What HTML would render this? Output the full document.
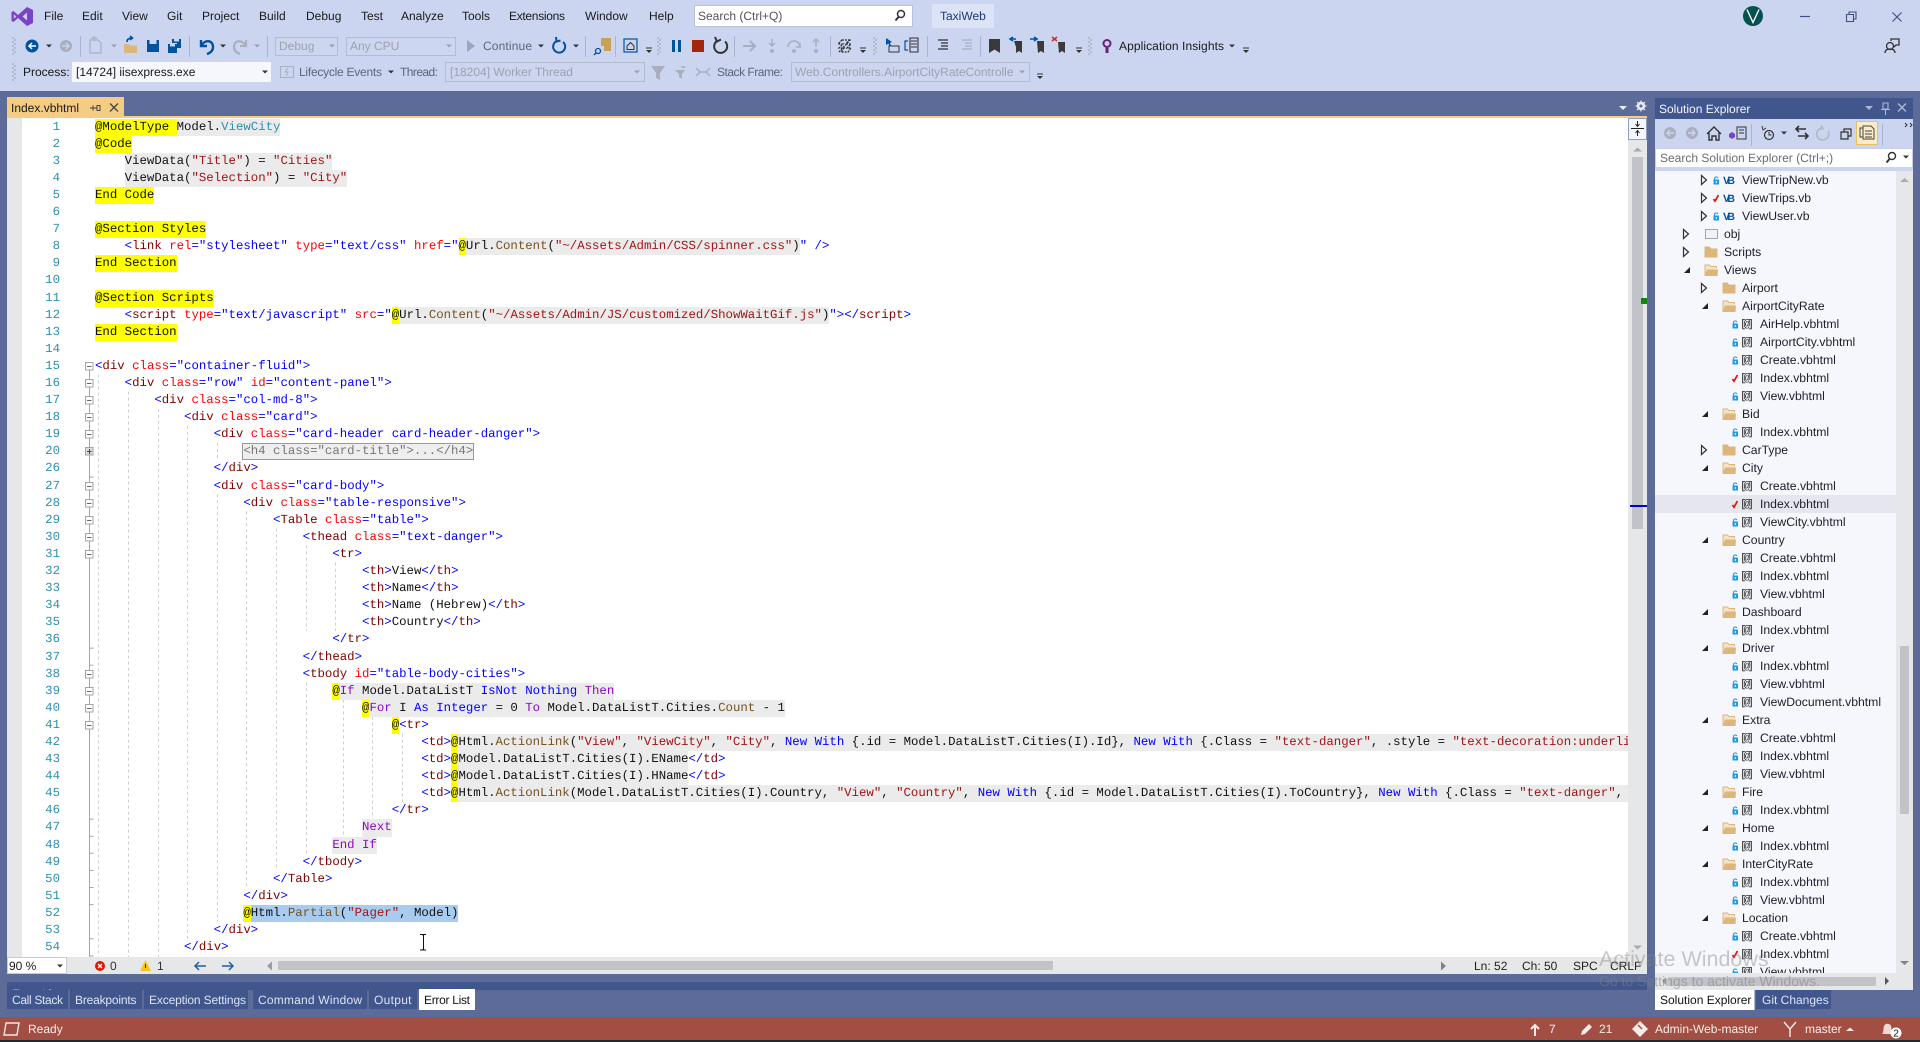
<!DOCTYPE html>
<html><head><meta charset="utf-8"><title>Index.vbhtml - TaxiWeb</title>
<style>
html,body{margin:0;padding:0;width:1920px;height:1042px;overflow:hidden;background:#5D6B99}
svg{position:absolute;left:0;top:0}
svg text{font-family:"Liberation Sans",sans-serif;font-size:12px;text-rendering:geometricPrecision}
svg .tree text{font-size:12.2px}
svg .tree text.vb{font-size:10.5px;font-weight:bold;fill:#00539C}
svg .at text{font-family:"Liberation Mono",monospace;font-size:11px}
#nums,#code{position:absolute;top:118.6px;font-family:"Liberation Mono",monospace;font-size:12.37px;line-height:17.1px;text-rendering:geometricPrecision;overflow:hidden;height:838.4px}
#nums{left:22px;width:38px;text-align:right;color:#2B91AF}
#code{left:95px;width:1533px;color:#111}
#nums div,#code div{height:17.1px;white-space:pre}
b,i,u,s,em,kbd,var{font:inherit;text-decoration:none;font-style:normal;font-weight:normal}
b{color:#0000FF}i{color:#800000}u{color:#FF0000}s{color:#A31515}em{color:#74531F}kbd{color:#8F08C4}var{color:#2B91AF}
mark,ins,del{display:inline-block;height:17.1px;vertical-align:top;text-decoration:none;color:inherit}
mark{background:#FFFF00}ins{background:#EBEBEB}del{background:#A8CCF0}
.fold{display:inline-block;height:15px;line-height:14px;margin-top:1px;vertical-align:top;background:#EEE;outline:1px solid #999;color:#777}
</style></head><body>
<svg width="1920" height="1042" viewBox="0 0 1920 1042">
<defs>
<path id="dr" d="M-3-1.5h6l-3 3z" fill="#333"/>
<path id="drg" d="M-3-1.5h6l-3 3z" fill="#9AA0B0"/>
<g id="of"><path d="M-3-3h6" stroke="#333"/><path d="M-3-1h6l-3 3z" fill="#333"/></g>
<g id="gr" fill="#777"><circle cx="-1" cy="-8" r=".6"/><circle cx="1" cy="-6" r=".6"/><circle cx="-1" cy="-4" r=".6"/><circle cx="1" cy="-2" r=".6"/><circle cx="-1" cy="0" r=".6"/><circle cx="1" cy="2" r=".6"/><circle cx="-1" cy="4" r=".6"/><circle cx="1" cy="6" r=".6"/><circle cx="-1" cy="8" r=".6"/></g>
<g id="ob"><rect x="-3.5" y="-3.5" width="7.5" height="7.5" fill="#fff" stroke="#A5A5A5"/><path d="M-2 .5h4.500" stroke="#666"/></g>
<g id="ex"><path d="M-2.500-4.500L2.500 0-2.500 4.500z" fill="none" stroke="#333" stroke-width="1.200"/></g>
<path id="op" d="M4-3V3H-2z" fill="#222"/>
<path id="fc" d="M-6.500-5.500h5l1.500 2h6.500v9h-13z" fill="#DCB67A"/>
<g id="fo"><path d="M-6 5.500V-5h4.500l1.500 1.500h5.500v2" fill="#F3E3C8" stroke="#DCB67A"/><path d="M-6.500 6L-4-.500H7L6.500 6z" fill="#DCB67A"/></g>
<g id="lk"><path d="M-2.500-.500h5.500v5h-5.500z" fill="#1E9CE8"/><path d="M-1.500-.500v-1.500a2 2 0 0 1 3.500 0" fill="none" stroke="#1E9CE8" stroke-width="1.100"/><rect x="-.200" y="1" width="1" height="2" fill="#fff"/></g>
<path id="ck" d="M-2.500 1L-1 3.200 2.500-3" fill="none" stroke="#E51400" stroke-width="1.700"/>
<clipPath id="tc"><rect x="1655" y="171" width="241" height="802"/></clipPath>
<clipPath id="dc"><rect x="7" y="982" width="1640" height="8"/></clipPath>
</defs>

<!-- chrome backgrounds -->
<rect width="1920" height="1042" fill="#5D6B99"/>
<rect width="1920" height="91" fill="#CCD5F0"/>
<rect x="7" y="97" width="117" height="21" fill="#F5CC84"/>
<rect x="7" y="116" width="1640" height="2" fill="#F5CC84"/>
<rect x="7" y="118" width="15" height="839" fill="#E6E7E8"/>
<rect x="22" y="118" width="1606" height="839" fill="#fff"/>
<rect x="1628" y="118" width="19" height="839" fill="#E6E7E8"/>
<rect x="7" y="957" width="1640" height="17" fill="#E6E7E8"/>
<rect x="7" y="982" width="1640" height="8" fill="#40568D"/>
<text x="12" y="998" fill="#fff" clip-path="url(#dc)">Error List</text>
<rect x="0" y="1017" width="1920" height="23" fill="#A34E43"/>
<rect x="0" y="1040" width="1920" height="2" fill="#1E2A2C"/>

<!-- Title bar -->
<path d="M27 7L33 10V23L27 26 18 18 13.500 22 11.500 21V12L13.500 11 18 15zM27 12.500L22.500 16.500 27 20.500zM13.800 14.200V18.800L16.300 16.500z" fill="#7B42C8" fill-rule="evenodd"/>
<g fill="#1A1A1A">
<text x="44" y="20">File</text><text x="82" y="20">Edit</text><text x="122" y="20">View</text><text x="167" y="20">Git</text><text x="202" y="20">Project</text><text x="259" y="20">Build</text><text x="306" y="20">Debug</text><text x="361" y="20">Test</text><text x="401" y="20">Analyze</text><text x="462" y="20">Tools</text><text x="509" y="20" textLength="56">Extensions</text><text x="585" y="20">Window</text><text x="649" y="20">Help</text>
</g>
<rect x="694.500" y="5.500" width="218" height="21" fill="#fff" stroke="#B9C1D8"/>
<text x="698" y="20" fill="#555">Search (Ctrl+Q)</text>
<g fill="none" stroke="#333" stroke-width="1.500"><circle cx="901" cy="14" r="3.500"/><path d="M898.500 17l-3 3.500" stroke-width="2"/></g>
<rect x="932" y="4" width="62" height="24" fill="#DDE3F7"/>
<text x="940" y="20" fill="#1F3A73">TaxiWeb</text>
<circle cx="1753" cy="16" r="10" fill="#06504F"/>
<path d="M1747 9.500l6 13 6-13" fill="none" stroke="#fff" stroke-width="1.400"/>
<path d="M1800 16.500h10" stroke="#3F4F80" stroke-width="1.200"/>
<path d="M1846.500 14.500h7v7h-7z M1849 14.500v-2.500h7v7h-2.500" fill="none" stroke="#3F4F80" stroke-width="1.100"/>
<path d="M1892.500 12.500l9 9m0-9l-9 9" stroke="#3F4F80" stroke-width="1.100"/>
<g fill="none" stroke="#333" stroke-width="1.300"><circle cx="1890" cy="46" r="3.500"/><path d="M1885 53c0-3 2-4 5-4s5 1 5 4"/><path d="M1891 41v-2h8v6h-3l-2 2"/></g>

<!-- Toolbar 1 -->
<use href="#gr" x="14" y="46"/>
<circle cx="32" cy="46" r="6.500" fill="#00539C"/><path d="M36 46h-7m3-3l-3 3 3 3" fill="none" stroke="#fff" stroke-width="1.500"/>
<use href="#dr" x="49" y="46"/>
<circle cx="66" cy="46" r="6" fill="#A9AFBF"/><path d="M62 46h7m-3-3l3 3-3 3" fill="none" stroke="#CCD5F0" stroke-width="1.400"/>
<path d="M80.500 36v21M189.500 36v21M267.500 36v21M585.500 36v21M615.500 36v21M734.500 36v21M830.500 36v21M927.500 36v21M980.500 36v21" stroke="#A9B4D0"/>
<path d="M90 40h8l3 3v10H90z M94 36v5m-3-3h6" fill="none" stroke="#A9AFBF" stroke-width="1.200"/>
<use href="#drg" x="114" y="46"/>
<path d="M124 52V44h5l1 1.500h7V53H124z" fill="#DCB67A"/><path d="M127 42c0-3 2-4 5-4m-2-2l2.500 2-2.500 2" fill="none" stroke="#00539C" stroke-width="1.600"/>
<path d="M147 40h12v12h-12z" fill="#00539C"/><path d="M149.500 40h7v4h-7z" fill="#CCD5F0"/>
<path d="M168 44h9v9h-9z M172 39h9v9h-4v-5h-5z" fill="#00539C"/><path d="M170 44h5v2.500h-5z M174 39h5v2.500h-5z" fill="#CCD5F0"/>
<path d="M201 40v6h6 M201 46c4-7 12-6 12 1 0 4-3 6-6 7" fill="none" stroke="#00539C" stroke-width="2.400"/>
<use href="#dr" x="223" y="46"/>
<path d="M246 40v6h-6 M246 46c-4-7-12-6-12 1 0 4 3 6 6 7" fill="none" stroke="#A9AFBF" stroke-width="2.200"/>
<use href="#drg" x="257" y="46"/>
<rect x="275.500" y="37.500" width="62" height="18" fill="#CDD6EE" stroke="#B5BCD0"/><text x="279" y="50" fill="#9CA2B2">Debug</text><use href="#drg" x="332" y="46"/>
<rect x="346.500" y="37.500" width="109" height="18" fill="#CDD6EE" stroke="#B5BCD0"/><text x="350" y="50" fill="#9CA2B2">Any CPU</text><use href="#drg" x="449" y="46"/>
<path d="M467 40l8 6-8 6z" fill="#9CA5BC"/>
<text x="483" y="50" fill="#5E6678" textLength="49">Continue</text><use href="#dr" x="541" y="46"/>
<path d="M563 42a6 6 0 1 1-7-.500M556 37l.500 4.500 4-1" fill="none" stroke="#00539C" stroke-width="2"/>
<use href="#dr" x="576" y="46"/>
<path d="M601 38h10v13h-7v-5h-3z" fill="#C9A05A"/><circle cx="598" cy="51" r="2.500" fill="none" stroke="#00539C" stroke-width="1.300"/><path d="M596 53l-2 2" stroke="#00539C" stroke-width="1.500"/>
<rect x="624" y="39" width="13" height="13" fill="none" stroke="#00539C" stroke-width="1.200"/><path d="M627 46l3.500-3.500 3.500 3.500v3.500h-7z" fill="none" stroke="#333"/>
<use href="#of" x="649" y="51"/><use href="#gr" x="659" y="46"/>
<path d="M672 40h3v12h-3z M678 40h3v12h-3z" fill="#00539C"/>
<rect x="692" y="40" width="12" height="12" fill="#A1260D"/>
<path d="M725 41.500a6.500 6.500 0 1 1-8-.500M715 37l2 4.500 4-2" fill="none" stroke="#333" stroke-width="2"/>
<path d="M743 46h12m-5-5l5 5-5 5" fill="none" stroke="#A9AFBF" stroke-width="2"/>
<path d="M772 39v7m-3-3l3 3 3-3" fill="none" stroke="#A9AFBF" stroke-width="1.500"/><circle cx="772" cy="51" r="2" fill="#A9AFBF"/>
<path d="M788 47c0-8 12-8 12 0m0-4v4h-4" fill="none" stroke="#A9AFBF" stroke-width="1.600"/><circle cx="794" cy="51" r="2" fill="#A9AFBF"/>
<path d="M816 47v-8m-3 3l3-3 3 3" fill="none" stroke="#A9AFBF" stroke-width="1.500"/><circle cx="816" cy="51" r="2" fill="#A9AFBF"/>
<path d="M839 52l12-13M842 40h7l-3 4h5l-4 4h4l-3 4h-7l3-4h-5l4-4h-5z" fill="none" stroke="#333" stroke-width="1.300" stroke-dasharray="2 1"/>
<use href="#of" x="863" y="51"/><use href="#gr" x="875" y="46"/>
<path d="M886 38l6 4-2 1 1 3-1.500.500-1-3-2.500 1.500z" fill="#00539C"/><rect x="889" y="46" width="10" height="6" fill="none" stroke="#333"/>
<path d="M908 41h-3v9h3" fill="none" stroke="#00539C" stroke-width="1.200"/><path d="M910 38h8v14h-8zM911 41h6M911 44h6M911 47h6" fill="none" stroke="#333" stroke-width="1.100"/>
<path d="M938 40h10M941 43h7M941 46h7M938 49h10" stroke="#333" stroke-width="1.200"/>
<path d="M962 40h10M965 43h7M965 46h7M962 49h10" stroke="#A9AFBF" stroke-width="1.200"/>
<path d="M989 39h11v14l-5.500-3.500L989 53z" fill="#3A3A3A"/>
<path d="M1014 41h8v12l-3-2-3 2v-6" fill="#3A3A3A"/><path d="M1016 39h-5m2-2l-3 2 3 2" stroke="#00539C" fill="none" stroke-width="1.600"/>
<path d="M1037 41h7v12l-3-2-3 2z" fill="#3A3A3A"/><path d="M1030 39h6m-2-2l3 2-3 2" stroke="#00539C" fill="none" stroke-width="1.600"/>
<path d="M1058 42h7v11l-3-2-3 2z" fill="#3A3A3A"/><path d="M1052 37l5 4m0-4l-5 4" stroke="#C4302B" stroke-width="1.600"/>
<use href="#of" x="1079" y="51"/><use href="#gr" x="1090" y="46"/>
<circle cx="1107" cy="43.500" r="3.500" fill="none" stroke="#68217A" stroke-width="2"/><path d="M1105.500 48h3v5h-3z" fill="#68217A"/>
<text x="1119" y="50" fill="#1A1A1A" textLength="105">Application Insights</text><use href="#dr" x="1232" y="46"/><use href="#of" x="1246" y="51"/>

<!-- Toolbar 2 -->
<use href="#gr" x="14" y="72"/>
<text x="23" y="76" fill="#1A1A1A">Process:</text>
<rect x="72" y="62" width="199" height="20" fill="#F5F7FD"/>
<text x="76" y="76" fill="#1A1A1A">[14724] iisexpress.exe</text><use href="#dr" x="265" y="72"/>
<rect x="280.500" y="66.500" width="13" height="11" fill="none" stroke="#A9AFBF"/><path d="M288 68l-3 4h3l-2 4" stroke="#A9AFBF" fill="none"/>
<text x="299" y="76" fill="#5E6678" textLength="83">Lifecycle Events</text><use href="#dr" x="391" y="72"/>
<text x="400" y="76" fill="#5E6678" textLength="38">Thread:</text>
<rect x="445.500" y="62.500" width="199" height="19" fill="#CDD6EE" stroke="#B5BCD0"/><text x="450" y="76" fill="#9CA2B2">[18204] Worker Thread</text><use href="#drg" x="637" y="72"/>
<path d="M651 66h14l-5 7v7l-4-2v-5z" fill="#A9AFBF"/>
<path d="M675 70h10l-3 4v5l-3-2v-3z M680 66l6 .500-2 2" fill="#A9AFBF"/>
<path d="M696 68l4 4-4 4M710 68l-4 4 4 4M700 72h6" fill="none" stroke="#A9AFBF" stroke-width="1.500"/>
<text x="717" y="76" fill="#5E6678" textLength="66">Stack Frame:</text>
<rect x="791.500" y="62.500" width="238" height="19" fill="#CDD6EE" stroke="#B5BCD0"/>
<svg x="791" y="62" width="223" height="20"><text x="4" y="14" fill="#9CA2B2">Web.Controllers.AirportCityRateController</text></svg>
<use href="#drg" x="1022" y="72"/><use href="#of" x="1040" y="77"/>

<!-- Document tab -->
<text x="11" y="112" fill="#1A1A1A">Index.vbhtml</text>
<path d="M93 105.500v5M93 108h4M97 105.500v5h3v-5zM90 108h3" stroke="#444" fill="none"/>
<path d="M110 103.500l8 8m0-8l-8 8" stroke="#444" stroke-width="1.300"/>
<path d="M1619 106h8l-4 4z" fill="#E8EBF5"/>
<circle cx="1641" cy="106" r="3" fill="none" stroke="#E8EBF5" stroke-width="2.400"/><path d="M1641 100.500v11M1635.500 106h11M1637 102l8 8M1645 102l-8 8" stroke="#E8EBF5" stroke-width="1.200"/><circle cx="1641" cy="106" r="1.500" fill="#5D6B99"/>

<!-- Editor scrollbar -->
<rect x="1628.500" y="118.500" width="18" height="21" fill="#F5F6FC" stroke="#8FA0C8"/>
<path d="M1631 128.500h13M1637.500 121v5m-2-2l2 2.500 2-2.500M1637.500 136v-5m-2 2l2-2.500 2 2.500" fill="none" stroke="#222"/>
<path d="M1633 151.500l4.500-4 4.500 4z" fill="#A9ABB2"/>
<rect x="1632" y="157" width="11" height="372" fill="#C2C3C9"/>
<rect x="1641" y="298" width="6" height="6" fill="#0A8A0A"/>
<rect x="1630" y="505" width="17" height="2" fill="#0000CC"/>
<path d="M1633 945.500l4.500 4 4.500-4z" fill="#A9ABB2"/>

<!-- Outlining margin -->
<path d="M89.500 362V957" stroke="#A5A5A5"/>
<path d="M89.500 477.100h4M89.500 648.100h4M89.500 665.200h4M89.500 819.100h4M89.500 836.200h4M89.500 853.300h4M89.500 870.400h4M89.500 887.500h4M89.500 904.600h4M89.500 938.800h4M89.500 955.900h4" stroke="#A5A5A5"/>
<use href="#ob" x="89" y="366"/><use href="#ob" x="89" y="383"/><use href="#ob" x="89" y="400"/><use href="#ob" x="89" y="417"/><use href="#ob" x="89" y="434"/>
<rect x="85.500" y="447.500" width="7.500" height="7.500" fill="#DDD" stroke="#A5A5A5"/><path d="M87 451.500h4.500M89.500 449v5" stroke="#444"/>
<use href="#ob" x="89" y="486"/><use href="#ob" x="89" y="503"/><use href="#ob" x="89" y="520"/><use href="#ob" x="89" y="537"/><use href="#ob" x="89" y="554"/>
<use href="#ob" x="89" y="674"/><use href="#ob" x="89" y="691"/><use href="#ob" x="89" y="708"/><use href="#ob" x="89" y="725"/>

<!-- indent guides -->
<g stroke="#CFCFCF" stroke-dasharray="3 3">
<path d="M98.500 374.500V957M128.500 391.600V957M158.500 408.700V957M187.500 425.800V938.800M217.500 442.900V460M217.500 494.200V921.700M246.500 511.300V887.500M276.500 528.400V870.400M306.500 545.500V631M306.500 682.300V853.300M335.500 562.600V631M343.500 699.400V836.200M372.500 716.500V819.100M402.500 733.600V802"/>
</g>

<!-- Text cursor -->
<path d="M420 934.500h2.500l.500.500.500-.500h2.500M423.500 935v14.500M420 950h2.500l.500-.500.500.500h2.500" fill="none" stroke="#111"/>

<!-- Editor footer -->
<rect x="7.500" y="957.500" width="59" height="16" fill="#fff" stroke="#C5CBDD"/>
<text x="9" y="970" fill="#1A1A1A">90 %</text><use href="#dr" x="60" y="966"/>
<circle cx="100" cy="966" r="5" fill="#E51400"/><path d="M98 964l4 4m0-4l-4 4" stroke="#fff" stroke-width="1.300"/>
<text x="110" y="970" fill="#333">0</text>
<path d="M145.500 960l5.500 11h-11z" fill="#F5C518"/><path d="M145.500 964v4" stroke="#333"/>
<text x="157" y="970" fill="#333">1</text>
<path d="M206 966h-11m4-4l-4 4 4 4M222 966h11m-4-4l4 4-4 4" fill="none" stroke="#1E5FA8" stroke-width="1.500"/>
<path d="M272 961.500v9l-5-4.500z" fill="#9A9CA3"/>
<rect x="278" y="961" width="775" height="9" fill="#C2C3C9"/>
<path d="M1441 961.500v9l5-4.500z" fill="#7E8190"/>
<g fill="#222"><text x="1474" y="970">Ln: 52</text><text x="1522" y="970">Ch: 50</text><text x="1573" y="970">SPC</text><text x="1610" y="970">CRLF</text></g>

<!-- Bottom tabs -->
<g fill="#40568D"><rect x="7" y="990" width="61" height="19"/><rect x="70" y="990" width="72" height="19"/><rect x="144" y="990" width="104" height="19"/><rect x="253" y="990" width="114" height="19"/><rect x="369" y="990" width="48" height="19"/></g>
<rect x="419" y="989" width="56" height="21" fill="#fff"/>
<g fill="#DCE2F3"><text x="12" y="1004" textLength="51">Call Stack</text><text x="75" y="1004" textLength="61.500">Breakpoints</text><text x="149" y="1004" textLength="97">Exception Settings</text><text x="258" y="1004" textLength="104">Command Window</text><text x="374" y="1004" textLength="37.500">Output</text></g>
<text x="424" y="1004" fill="#111" textLength="46">Error List</text>

<!-- Solution Explorer -->
<rect x="1655" y="98" width="258" height="21" fill="#40568D"/>
<text x="1659" y="113" fill="#F3F5FB">Solution Explorer</text>
<path d="M1865 106h8l-4 4z" fill="#AEB8D4"/>
<path d="M1883 103h5v6h-5zM1881 109.500h9M1885.500 110v5" fill="none" stroke="#AEB8D4" stroke-width="1.100"/>
<path d="M1898 103.500l8 8m0-8l-8 8" stroke="#AEB8D4" stroke-width="1.400"/>
<rect x="1655" y="119" width="258" height="48" fill="#CCD5F0"/>
<circle cx="1670" cy="133" r="6" fill="#A9AFBF"/><path d="M1674 133h-7m3-3l-3 3 3 3" fill="none" stroke="#CCD5F0" stroke-width="1.400"/>
<circle cx="1692" cy="133" r="6" fill="#A9AFBF"/><path d="M1688 133h7m-3-3l3 3-3 3" fill="none" stroke="#CCD5F0" stroke-width="1.400"/>
<path d="M1707 134l7-7 7 7M1709 132v8h3v-4h4v4h3v-8" fill="none" stroke="#333" stroke-width="1.400"/>
<path d="M1737 127h9v12h-9zM1739 130h5M1739 133h5" fill="none" stroke="#333"/><path d="M1729 134l3-2 3 2v3l-3 2-3-2z" fill="#7B42C8"/>
<path d="M1751.500 124v22M1882.500 124v22" stroke="#A9B4D0"/>
<circle cx="1769" cy="135" r="4.500" fill="none" stroke="#333" stroke-width="1.200"/><path d="M1769 132v3h2.500M1762 126l1 4 3-2" fill="none" stroke="#333"/>
<use href="#dr" x="1784" y="133"/>
<path d="M1796 129h10M1799 126l-3 3 3 3M1808 136h-10M1805 133l3 3-3 3" fill="none" stroke="#333" stroke-width="1.600"/>
<path d="M1828 131a6 6 0 1 1-6-3m-1-2.500l2 3-3 1" fill="none" stroke="#B4BAC8" stroke-width="1.800"/>
<path d="M1841 132h7v7h-7zM1844 132v-3h7v7h-3" fill="none" stroke="#333" stroke-width="1.200"/>
<rect x="1856.500" y="121.500" width="21" height="23" fill="#FCEBC8" stroke="#E5C365"/>
<path d="M1863 128h-3v9h3M1863 126h8l3 3v10h-11zM1865 131h7M1865 134h7M1865 137h7" fill="none" stroke="#444"/>
<path d="M1905 123l2 2-2 2M1910 123l2 2-2 2" fill="none" stroke="#333"/>
<rect x="1655.500" y="148.500" width="257" height="19" fill="#fff" stroke="#C8CFE6"/>
<text x="1660" y="162" fill="#6D6D6D">Search Solution Explorer (Ctrl+;)</text>
<circle cx="1892" cy="156" r="3.500" fill="none" stroke="#333" stroke-width="1.400"/><path d="M1889.500 159l-3 3.500" stroke="#333" stroke-width="2"/>
<use href="#dr" x="1906" y="157"/>
<rect x="1655" y="167" width="258" height="4" fill="#CCD5F0"/>
<rect x="1655" y="171" width="241" height="802" fill="#F6F7FD"/>
<rect x="1896" y="171" width="17" height="802" fill="#E6E7E8"/>
<path d="M1900 182l4.500-4 4.500 4z" fill="#A9ABB2"/>
<rect x="1900" y="646" width="9" height="168" fill="#C2C3C9"/>
<path d="M1900 961l4.500 4 4.500-4z" fill="#80838C"/>
<rect x="1655" y="495" width="241" height="18" fill="#E6E7EE"/>
<g clip-path="url(#tc)">
<g class="tree" fill="#1E1E2E">
<use href="#ex" x="1704" y="180"/><use href="#lk" x="1716" y="180"/><text class="vb" x="1723" y="184" textLength="12">VB</text><text x="1742" y="184">ViewTripNew.vb</text>
<use href="#ex" x="1704" y="198"/><use href="#ck" x="1716" y="198"/><text class="vb" x="1723" y="202" textLength="12">VB</text><text x="1742" y="202">ViewTrips.vb</text>
<use href="#ex" x="1704" y="216"/><use href="#lk" x="1716" y="216"/><text class="vb" x="1723" y="220" textLength="12">VB</text><text x="1742" y="220">ViewUser.vb</text>
<use href="#ex" x="1686" y="234"/><rect x="1705.500" y="229.500" width="12" height="9" fill="#EEF0FA" stroke="#555" stroke-dasharray="1 1"/><text x="1724" y="238">obj</text>
<use href="#ex" x="1686" y="252"/><use href="#fc" x="1711" y="252"/><text x="1724" y="256">Scripts</text>
<use href="#op" x="1686" y="270"/><use href="#fo" x="1711" y="270"/><text x="1724" y="274">Views</text>
<use href="#ex" x="1704" y="288"/><use href="#fc" x="1729" y="288"/><text x="1742" y="292">Airport</text>
<use href="#op" x="1704" y="306"/><use href="#fo" x="1729" y="306"/><text x="1742" y="310">AirportCityRate</text>
<use href="#lk" x="1735" y="324"/><text x="1760" y="328">AirHelp.vbhtml</text>
<use href="#lk" x="1735" y="342"/><text x="1760" y="346">AirportCity.vbhtml</text>
<use href="#lk" x="1735" y="360"/><text x="1760" y="364">Create.vbhtml</text>
<use href="#ck" x="1735" y="378"/><text x="1760" y="382">Index.vbhtml</text>
<use href="#lk" x="1735" y="396"/><text x="1760" y="400">View.vbhtml</text>
<use href="#op" x="1704" y="414"/><use href="#fo" x="1729" y="414"/><text x="1742" y="418">Bid</text>
<use href="#lk" x="1735" y="432"/><text x="1760" y="436">Index.vbhtml</text>
<use href="#ex" x="1704" y="450"/><use href="#fc" x="1729" y="450"/><text x="1742" y="454">CarType</text>
<use href="#op" x="1704" y="468"/><use href="#fo" x="1729" y="468"/><text x="1742" y="472">City</text>
<use href="#lk" x="1735" y="486"/><text x="1760" y="490">Create.vbhtml</text>
<use href="#ck" x="1735" y="504"/><text x="1760" y="508">Index.vbhtml</text>
<use href="#lk" x="1735" y="522"/><text x="1760" y="526">ViewCity.vbhtml</text>
<use href="#op" x="1704" y="540"/><use href="#fo" x="1729" y="540"/><text x="1742" y="544">Country</text>
<use href="#lk" x="1735" y="558"/><text x="1760" y="562">Create.vbhtml</text>
<use href="#lk" x="1735" y="576"/><text x="1760" y="580">Index.vbhtml</text>
<use href="#lk" x="1735" y="594"/><text x="1760" y="598">View.vbhtml</text>
<use href="#op" x="1704" y="612"/><use href="#fo" x="1729" y="612"/><text x="1742" y="616">Dashboard</text>
<use href="#lk" x="1735" y="630"/><text x="1760" y="634">Index.vbhtml</text>
<use href="#op" x="1704" y="648"/><use href="#fo" x="1729" y="648"/><text x="1742" y="652">Driver</text>
<use href="#lk" x="1735" y="666"/><text x="1760" y="670">Index.vbhtml</text>
<use href="#lk" x="1735" y="684"/><text x="1760" y="688">View.vbhtml</text>
<use href="#lk" x="1735" y="702"/><text x="1760" y="706">ViewDocument.vbhtml</text>
<use href="#op" x="1704" y="720"/><use href="#fo" x="1729" y="720"/><text x="1742" y="724">Extra</text>
<use href="#lk" x="1735" y="738"/><text x="1760" y="742">Create.vbhtml</text>
<use href="#lk" x="1735" y="756"/><text x="1760" y="760">Index.vbhtml</text>
<use href="#lk" x="1735" y="774"/><text x="1760" y="778">View.vbhtml</text>
<use href="#op" x="1704" y="792"/><use href="#fo" x="1729" y="792"/><text x="1742" y="796">Fire</text>
<use href="#lk" x="1735" y="810"/><text x="1760" y="814">Index.vbhtml</text>
<use href="#op" x="1704" y="828"/><use href="#fo" x="1729" y="828"/><text x="1742" y="832">Home</text>
<use href="#lk" x="1735" y="846"/><text x="1760" y="850">Index.vbhtml</text>
<use href="#op" x="1704" y="864"/><use href="#fo" x="1729" y="864"/><text x="1742" y="868">InterCityRate</text>
<use href="#lk" x="1735" y="882"/><text x="1760" y="886">Index.vbhtml</text>
<use href="#lk" x="1735" y="900"/><text x="1760" y="904">View.vbhtml</text>
<use href="#op" x="1704" y="918"/><use href="#fo" x="1729" y="918"/><text x="1742" y="922">Location</text>
<use href="#lk" x="1735" y="936"/><text x="1760" y="940">Create.vbhtml</text>
<use href="#ck" x="1735" y="954"/><text x="1760" y="958">Index.vbhtml</text>
<use href="#lk" x="1735" y="972"/><text x="1760" y="976">View.vbhtml</text>
</g>
<g class="at" fill="#222" transform="translate(1740 -1)">
<text y="328" textLength="14">[@]</text><text y="346" textLength="14">[@]</text><text y="364" textLength="14">[@]</text><text y="382" textLength="14">[@]</text><text y="400" textLength="14">[@]</text><text y="436" textLength="14">[@]</text><text y="490" textLength="14">[@]</text><text y="508" textLength="14">[@]</text><text y="526" textLength="14">[@]</text><text y="562" textLength="14">[@]</text><text y="580" textLength="14">[@]</text><text y="598" textLength="14">[@]</text><text y="634" textLength="14">[@]</text><text y="670" textLength="14">[@]</text><text y="688" textLength="14">[@]</text><text y="706" textLength="14">[@]</text><text y="742" textLength="14">[@]</text><text y="760" textLength="14">[@]</text><text y="778" textLength="14">[@]</text><text y="814" textLength="14">[@]</text><text y="850" textLength="14">[@]</text><text y="886" textLength="14">[@]</text><text y="904" textLength="14">[@]</text><text y="940" textLength="14">[@]</text><text y="958" textLength="14">[@]</text><text y="976" textLength="14">[@]</text>
</g>
</g>
<rect x="1655" y="973" width="258" height="17" fill="#E6E7E8"/>
<path d="M1666 977v8l-4-4z" fill="#9A9CA3"/>
<rect x="1668" y="977" width="208" height="9" fill="#C2C3C9"/>
<path d="M1885 977v8l4-4z" fill="#555"/>
<rect x="1655" y="990" width="99.500" height="20" fill="#fff"/>
<text x="1660" y="1004" fill="#111">Solution Explorer</text>
<rect x="1756" y="990" width="75" height="19" fill="#40568D"/>
<text x="1762" y="1004" fill="#DCE2F3">Git Changes</text>

<!-- Status bar -->
<path d="M6 1023h13l-2 12H4z" fill="none" stroke="#F3E6E3" stroke-width="1.400"/>
<g fill="#F6ECEA"><text x="28" y="1033">Ready</text><text x="1549" y="1033">7</text><text x="1599" y="1033">21</text><text x="1655" y="1033">Admin-Web-master</text><text x="1805" y="1033">master</text></g>
<path d="M1535 1036v-11m-4 4l4-4 4 4" fill="none" stroke="#F6ECEA" stroke-width="2"/>
<path d="M1581 1035l1-4 7-7 3 3-7 7z" fill="#F6ECEA"/>
<path d="M1640 1021l8 8-8 8-8-8z" fill="#F6ECEA"/><path d="M1638 1025l4 4" stroke="#A34E43" stroke-width="1.500"/>
<path d="M1784 1022l6 7 6-7M1790 1029v8" fill="none" stroke="#F6ECEA" stroke-width="1.400"/>
<path d="M1846 1031l4-3.500 4 3.500z" fill="#F6ECEA"/>
<path d="M1882 1034c2-2 1-5 2-8 1-3 6-3 7 0 1 3 0 6 2 8z" fill="#F0D9D5"/>
<circle cx="1896" cy="1033" r="5.500" fill="#fff"/>
<text x="1896" y="1036.500" text-anchor="middle" fill="#111" style="font-size:10px">2</text>

<!-- Activation watermark -->
<text x="1599" y="966" fill="#808080" fill-opacity=".42" style="font-size:21.500px">Activate Windows</text>
<text x="1599" y="986" fill="#808080" fill-opacity=".55" style="font-size:14px">Go to Settings to activate Windows.</text>
</svg>

<div id="nums"><div>1</div><div>2</div><div>3</div><div>4</div><div>5</div><div>6</div><div>7</div><div>8</div><div>9</div><div>10</div><div>11</div><div>12</div><div>13</div><div>14</div><div>15</div><div>16</div><div>17</div><div>18</div><div>19</div><div>20</div><div>26</div><div>27</div><div>28</div><div>29</div><div>30</div><div>31</div><div>32</div><div>33</div><div>34</div><div>35</div><div>36</div><div>37</div><div>38</div><div>39</div><div>40</div><div>41</div><div>42</div><div>43</div><div>44</div><div>45</div><div>46</div><div>47</div><div>48</div><div>49</div><div>50</div><div>51</div><div>52</div><div>53</div><div>54</div></div>

<div id="code"><div><mark>@ModelType </mark><ins>Model.<var>ViewCity</var></ins></div>
<div><mark>@Code</mark></div>
<div>    <ins>ViewData(<s>"Title"</s>) = <s>"Cities"</s></ins></div>
<div>    <ins>ViewData(<s>"Selection"</s>) = <s>"City"</s></ins></div>
<div><mark>End Code</mark></div>
<div> </div>
<div><mark>@Section Styles</mark></div>
<div>    <b>&lt;</b><i>link</i> <u>rel</u><b>="stylesheet"</b> <u>type</u><b>="text/css"</b> <u>href</u><b>="</b><mark>@</mark><ins>Url.<em>Content</em>(<s>"~/Assets/Admin/CSS/spinner.css"</s>)</ins><b>" /&gt;</b></div>
<div><mark>End Section</mark></div>
<div> </div>
<div><mark>@Section Scripts</mark></div>
<div>    <b>&lt;</b><i>script</i> <u>type</u><b>="text/javascript"</b> <u>src</u><b>="</b><mark>@</mark><ins>Url.<em>Content</em>(<s>"~/Assets/Admin/JS/customized/ShowWaitGif.js"</s>)</ins><b>"&gt;&lt;/</b><i>script</i><b>&gt;</b></div>
<div><mark>End Section</mark></div>
<div> </div>
<div><b>&lt;</b><i>div</i> <u>class</u><b>="container-fluid"&gt;</b></div>
<div>    <b>&lt;</b><i>div</i> <u>class</u><b>="row"</b> <u>id</u><b>="content-panel"&gt;</b></div>
<div>        <b>&lt;</b><i>div</i> <u>class</u><b>="col-md-8"&gt;</b></div>
<div>            <b>&lt;</b><i>div</i> <u>class</u><b>="card"&gt;</b></div>
<div>                <b>&lt;</b><i>div</i> <u>class</u><b>="card-header card-header-danger"&gt;</b></div>
<div>                    <span class="fold">&lt;h4 class="card-title"&gt;...&lt;/h4&gt;</span></div>
<div>                <b>&lt;/</b><i>div</i><b>&gt;</b></div>
<div>                <b>&lt;</b><i>div</i> <u>class</u><b>="card-body"&gt;</b></div>
<div>                    <b>&lt;</b><i>div</i> <u>class</u><b>="table-responsive"&gt;</b></div>
<div>                        <b>&lt;</b><i>Table</i> <u>class</u><b>="table"&gt;</b></div>
<div>                            <b>&lt;</b><i>thead</i> <u>class</u><b>="text-danger"&gt;</b></div>
<div>                                <b>&lt;</b><i>tr</i><b>&gt;</b></div>
<div>                                    <b>&lt;</b><i>th</i><b>&gt;</b>View<b>&lt;/</b><i>th</i><b>&gt;</b></div>
<div>                                    <b>&lt;</b><i>th</i><b>&gt;</b>Name<b>&lt;/</b><i>th</i><b>&gt;</b></div>
<div>                                    <b>&lt;</b><i>th</i><b>&gt;</b>Name (Hebrew)<b>&lt;/</b><i>th</i><b>&gt;</b></div>
<div>                                    <b>&lt;</b><i>th</i><b>&gt;</b>Country<b>&lt;/</b><i>th</i><b>&gt;</b></div>
<div>                                <b>&lt;/</b><i>tr</i><b>&gt;</b></div>
<div>                            <b>&lt;/</b><i>thead</i><b>&gt;</b></div>
<div>                            <b>&lt;</b><i>tbody</i> <u>id</u><b>="table-body-cities"&gt;</b></div>
<div>                                <mark>@</mark><ins><kbd>If</kbd> Model.DataListT <b>IsNot</b> <b>Nothing</b> <kbd>Then</kbd></ins></div>
<div>                                    <mark>@</mark><ins><kbd>For</kbd> I <b>As</b> <b>Integer</b> = 0 <kbd>To</kbd> Model.DataListT.Cities.<em>Count</em> - 1</ins></div>
<div>                                        <mark>@</mark><b>&lt;</b><i>tr</i><b>&gt;</b></div>
<div>                                            <b>&lt;</b><i>td</i><b>&gt;</b><mark>@</mark><ins>Html.<em>ActionLink</em>(<s>"View"</s>, <s>"ViewCity"</s>, <s>"City"</s>, <b>New</b> <b>With</b> {.id = Model.DataListT.Cities(I).Id}, <b>New</b> <b>With</b> {.Class = <s>"text-danger"</s>, .style = <s>"text-decoration:underline"</s>})</ins><b>&lt;/</b><i>td</i><b>&gt;</b></div>
<div>                                            <b>&lt;</b><i>td</i><b>&gt;</b><mark>@</mark><ins>Model.DataListT.Cities(I).EName</ins><b>&lt;/</b><i>td</i><b>&gt;</b></div>
<div>                                            <b>&lt;</b><i>td</i><b>&gt;</b><mark>@</mark><ins>Model.DataListT.Cities(I).HName</ins><b>&lt;/</b><i>td</i><b>&gt;</b></div>
<div>                                            <b>&lt;</b><i>td</i><b>&gt;</b><mark>@</mark><ins>Html.<em>ActionLink</em>(Model.DataListT.Cities(I).Country, <s>"View"</s>, <s>"Country"</s>, <b>New</b> <b>With</b> {.id = Model.DataListT.Cities(I).ToCountry}, <b>New</b> <b>With</b> {.Class = <s>"text-danger"</s>, .style = <s>"text-decoration:underline"</s>})</ins><b>&lt;/</b><i>td</i><b>&gt;</b></div>
<div>                                        <b>&lt;/</b><i>tr</i><b>&gt;</b></div>
<div>                                    <ins><kbd>Next</kbd></ins></div>
<div>                                <ins><kbd>End If</kbd></ins></div>
<div>                            <b>&lt;/</b><i>tbody</i><b>&gt;</b></div>
<div>                        <b>&lt;/</b><i>Table</i><b>&gt;</b></div>
<div>                    <b>&lt;/</b><i>div</i><b>&gt;</b></div>
<div>                    <mark>@</mark><del>Html.<em>Partial</em>(<s>"Pager"</s>, Model)</del></div>
<div>                <b>&lt;/</b><i>div</i><b>&gt;</b></div>
<div>            <b>&lt;/</b><i>div</i><b>&gt;</b></div></div>
</body></html>
